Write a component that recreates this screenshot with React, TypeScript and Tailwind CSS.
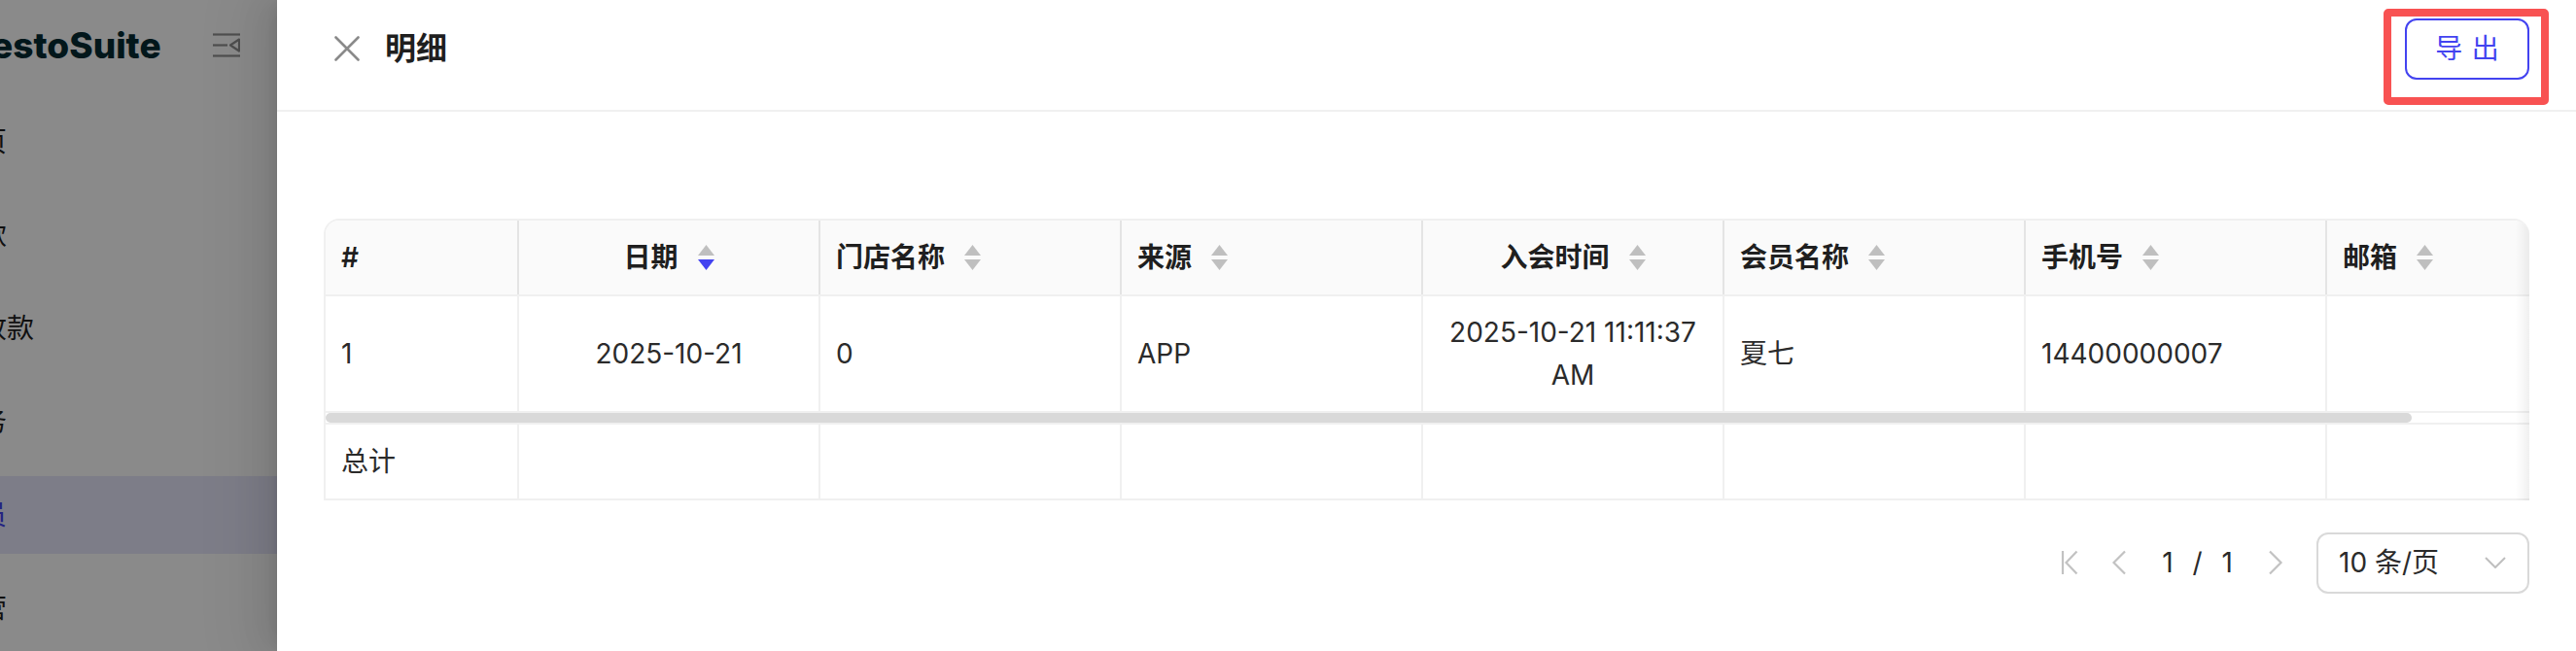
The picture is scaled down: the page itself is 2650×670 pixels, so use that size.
import React from "react";

type Col = {
  title: string;
  center?: boolean;
  sort?: "none" | "desc" | "off";
};

const columns: Col[] = [
  { title: "#", sort: "off" },
  { title: "日期", center: true, sort: "desc" },
  { title: "门店名称" },
  { title: "来源" },
  { title: "入会时间", center: true },
  { title: "会员名称" },
  { title: "手机号" },
  { title: "邮箱" },
];

const row = ["1", "2025-10-21", "0", "APP", "2025-10-21 11:11:37 AM", "夏七", "14400000007", ""];
const summary = ["总计", "", "", "", "", "", "", ""];

const menu = [
  { label: "首页" },
  { label: "付款" },
  { label: "预收款" },
  { label: "财务" },
  { label: "会员", active: true },
  { label: "运营" },
];

function SortIcon({ active }: { active?: boolean }) {
  return (
    <svg width="17" height="26" viewBox="0 0 17 26" className="shrink-0">
      <path d="M8.5 0 L17 11 L0 11 Z" fill="#bfbfbf" />
      <path d="M0 15 L17 15 L8.5 26 Z" fill={active ? "#4343f0" : "#bfbfbf"} />
    </svg>
  );
}

function CloseIcon() {
  return (
    <svg width="26" height="26" viewBox="0 0 26 26" className="ml-[11px] shrink-0">
      <path d="M1.5 1.5 L24.5 24.5 M24.5 1.5 L1.5 24.5" stroke="#8a8a8a" strokeWidth="2.6" strokeLinecap="round" />
    </svg>
  );
}

function CollapseIcon() {
  return (
    <svg width="28" height="25" viewBox="0 0 28 25" className="shrink-0">
      <g stroke="#909090" strokeWidth="2.2" fill="none" strokeLinejoin="round">
        <path d="M0 1.5 H28" />
        <path d="M0 12.5 H15" />
        <path d="M27 6.5 L18 12.5 L27 18.5 Z" />
        <path d="M0 23.5 H28" />
      </g>
    </svg>
  );
}

function Chevron({ dir }: { dir: "left" | "right" }) {
  return (
    <div className="flex h-[32px] w-[32px] items-center justify-center">
      <svg width="16" height="26" viewBox="0 0 16 26">
        <path
          d={dir === "left" ? "M14 1.5 L2.5 13 L14 24.5" : "M2 1.5 L13.5 13 L2 24.5"}
          stroke="#c2c2c2"
          strokeWidth="2.2"
          fill="none"
        />
      </svg>
    </div>
  );
}

function FirstPage() {
  return (
    <div className="flex h-[32px] w-[32px] items-center justify-center">
      <svg width="18" height="26" viewBox="0 0 18 26">
        <path d="M2 1 V25" stroke="#c2c2c2" strokeWidth="2.2" />
        <path d="M16.5 1.5 L5.5 13 L16.5 24.5" stroke="#c2c2c2" strokeWidth="2.2" fill="none" />
      </svg>
    </div>
  );
}

function Sidebar() {
  return (
    <aside className="relative h-full w-[285px] shrink-0 overflow-hidden bg-white">
      <div className="flex h-[93px] items-center justify-between pr-[38px]">
        <span className="-ml-[33px] font-[Inter,sans-serif] text-[37px] font-extrabold leading-none text-[#052b33]">
          RestoSuite
        </span>
        <CollapseIcon />
      </div>
      <nav className="flex flex-col gap-[16px] pt-[13px]">
        {menu.map((m) => (
          <div
            key={m.label}
            className={
              m.active
                ? "flex h-[80px] items-center bg-[#e7e7fb] text-[#4343f0]"
                : "flex h-[80px] items-center text-[#1f1f1f]"
            }
          >
            <span className="-ml-[49px] whitespace-nowrap text-[28px] leading-none">{m.label}</span>
          </div>
        ))}
      </nav>
      <div className="absolute inset-0 bg-black/[0.46]" />
    </aside>
  );
}

const grid = "grid grid-cols-[199px_repeat(6,310px)_335px] w-max";

function DataTable() {
  return (
    <div className="relative w-[2269px] overflow-hidden rounded-t-[16px] border-l-2 border-t-2 border-[#f0f0f0]">
      <div className={`${grid} border-b-2 border-[#f0f0f0] bg-[#fafafa]`}>
        {columns.map((c) => (
          <div
            key={c.title}
            className={`flex items-center border-r-2 border-[#e4e4e4] px-[16px] py-[16px] text-[28px] font-semibold leading-[44px] text-[#1f1f1f] ${
              c.center ? "justify-center" : "justify-start"
            }`}
          >
            <span>{c.title}</span>
            {c.sort !== "off" && (
              <span className="ml-[20px] flex">
                <SortIcon active={c.sort === "desc"} />
              </span>
            )}
          </div>
        ))}
      </div>
      <div className={`${grid} border-b-2 border-[#f0f0f0]`}>
        {row.map((v, i) => (
          <div
            key={i}
            className={`flex items-center border-r-2 border-[#f0f0f0] px-[16px] py-[15px] text-[28px] leading-[44px] text-[#2b2b2b] ${
              columns[i].center ? "justify-center text-center" : "justify-start"
            }`}
          >
            {v}
          </div>
        ))}
      </div>
      <div className="flex h-[10px] items-center">
        <div className="h-[10px] w-[2146px] rounded-full bg-[#d9d9d9]" />
      </div>
      <div className={`${grid} border-y-2 border-[#f0f0f0]`}>
        {summary.map((v, i) => (
          <div
            key={i}
            className="flex items-center border-r-2 border-[#f0f0f0] px-[16px] py-[16px] text-[28px] leading-[44px] text-[#2b2b2b]"
          >
            {v}
          </div>
        ))}
      </div>
      <div className="pointer-events-none absolute bottom-0 right-0 top-0 w-[14px] bg-linear-to-l from-black/[0.06] to-transparent" />
    </div>
  );
}

function Pagination() {
  return (
    <div className="mt-[32px] flex h-[64px] items-center justify-end text-[28px] leading-none text-[#2b2b2b]">
      <FirstPage />
      <div className="ml-[19px]">
        <Chevron dir="left" />
      </div>
      <div className="ml-[28px] flex items-center">
        <span>1</span>
        <span className="mx-[20px]">/</span>
        <span>1</span>
      </div>
      <div className="ml-[28px]">
        <Chevron dir="right" />
      </div>
      <div className="ml-[26px] flex h-[63px] w-[219px] items-center justify-between rounded-[12px] border-2 border-[#d9d9d9] pl-[21px] pr-[22px]">
        <span>10 条/页</span>
        <svg width="22" height="12" viewBox="0 0 22 12">
          <path d="M1 1 L11 11 L21 1" stroke="#bfbfbf" strokeWidth="2" fill="none" />
        </svg>
      </div>
    </div>
  );
}

export default function App() {
  return (
    <div className="flex h-[670px] w-[2650px] overflow-hidden bg-white font-[Inter,'Noto_Sans_CJK_SC',sans-serif]">
      <Sidebar />
      <section className="relative z-10 flex h-full flex-1 flex-col bg-white shadow-[-12px_0_32px_0_rgba(0,0,0,0.08),-6px_0_12px_-8px_rgba(0,0,0,0.12),-18px_0_56px_16px_rgba(0,0,0,0.05)]">
        <header className="flex h-[115px] shrink-0 items-center border-b-2 border-[#f0f0f0] px-[48px] pb-[13px]">
          <CloseIcon />
          <h2 className="ml-[26px] text-[32px] font-semibold leading-none text-[#1f1f1f]">明细</h2>
          <div className="relative ml-auto">
            <button className="flex h-[63px] w-[128px] items-center justify-center rounded-[12px] border-2 border-[#4343f0] bg-white text-[28px] leading-none text-[#4343f0]">
              <span className="-mr-[0.34em] tracking-[0.34em]">导出</span>
            </button>
            <div className="pointer-events-none absolute -bottom-[26px] -left-[22px] -right-[20px] -top-[10px] rounded-[5px] border-[8px] border-[#f85252]" />
          </div>
        </header>
        <div className="px-[48px] pt-[110px]">
          <DataTable />
          <Pagination />
        </div>
      </section>
    </div>
  );
}
